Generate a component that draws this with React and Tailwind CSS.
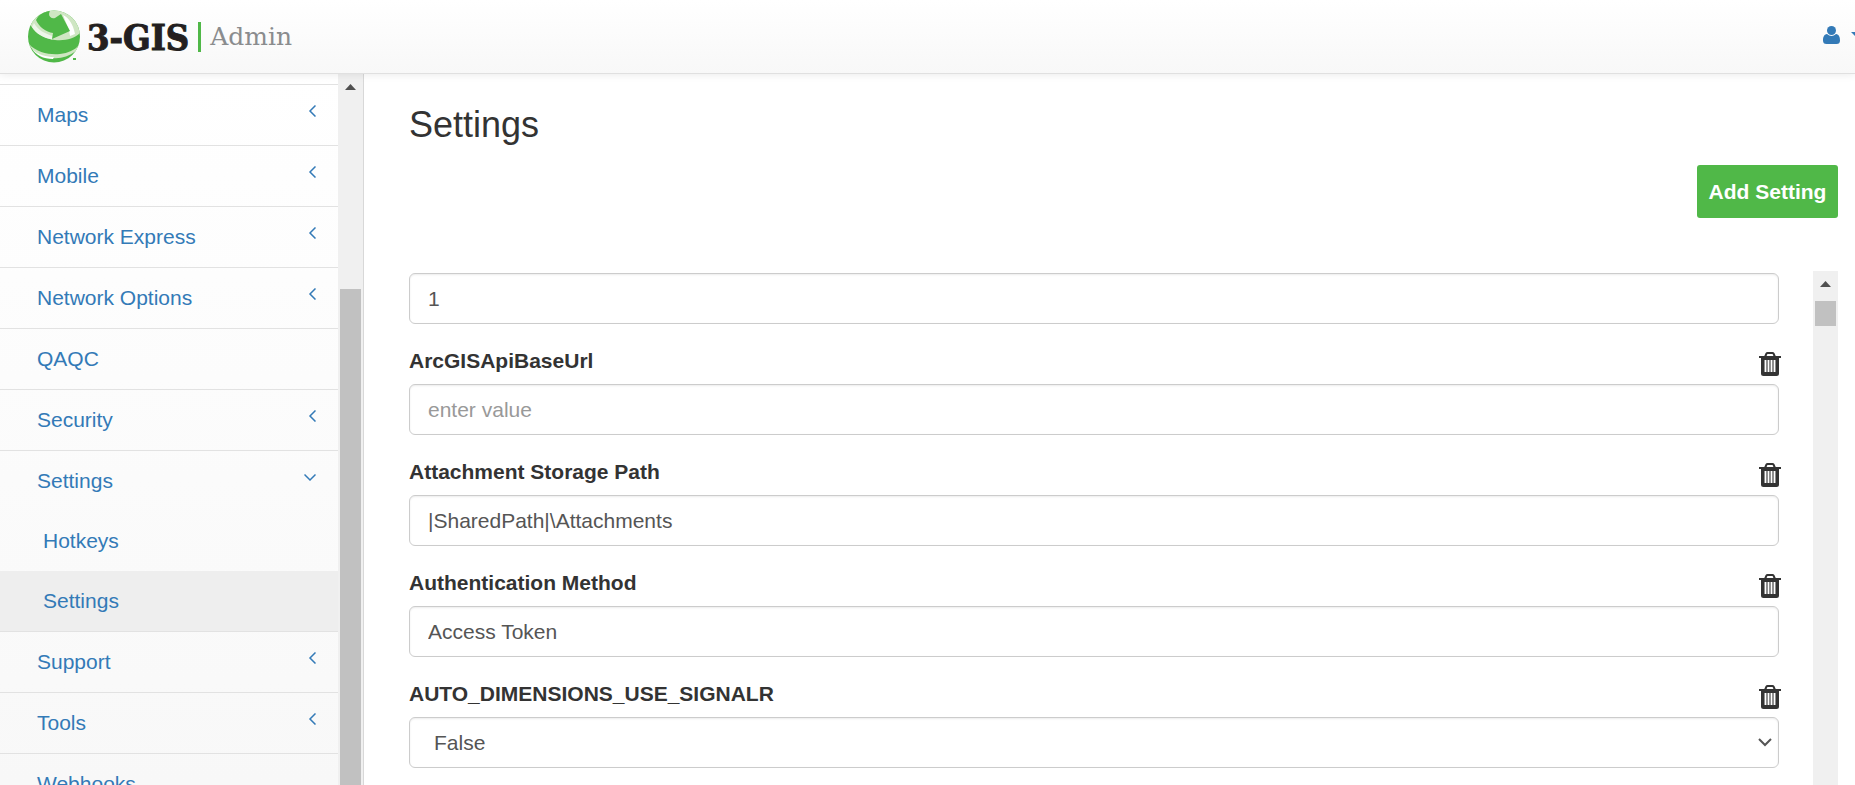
import { useState } from "react";

const menu = [
  { name: "Maps", children: true },
  { name: "Mobile", children: true },
  { name: "Network Express", children: true },
  { name: "Network Options", children: true },
  { name: "QAQC" },
  { name: "Security", children: true },
  { name: "Settings", children: true, open: true, items: ["Hotkeys", "Settings"] },
  { name: "Support", children: true },
  { name: "Tools", children: true },
  { name: "Webhooks" },
];

const initialSettings = [
  { name: "ArcGISApiBaseUrl", value: "" },
  { name: "Attachment Storage Path", value: "|SharedPath|\\Attachments" },
  { name: "Authentication Method", value: "Access Token" },
  { name: "AUTO_DIMENSIONS_USE_SIGNALR", value: "False", options: ["True", "False"] },
];

const fieldClass =
  "block h-[51px] w-full rounded-md border border-[#ccc] bg-white text-[21px] text-[#555] shadow-[inset_0_1px_2px_rgba(0,0,0,0.08)] outline-none placeholder:text-[#999]";

function Globe() {
  return (
    <svg className="h-[54px] w-[54px] shrink-0" viewBox="0 0 54 54">
      <defs>
        <clipPath id="globe">
          <circle cx="27" cy="26.500" r="26" />
        </clipPath>
      </defs>
      <g clipPath="url(#globe)">
        <rect width="54" height="54" fill="#50b848" />
        {/* band behind the arrow */}
        <path d="M0 0 H54 V22 C48 29 38 31 28 30 C19 29 9 24 4 16 Z" fill="#cfe6c3" />
        <path d="M36 5 C42 8 46 14 48 24 L43 26 L42 20 Z" fill="#fff" />
        <path d="M5 17 C9 24 17 28 25 29.500 L26 26 C18 24 11 20 7 13 Z" fill="#eef6ea" />
        {/* arrow */}
        <path d="M9 10 C12 4 17 1 23 0 L22 4 C22 7 25 9 28 8 L34 4 L43 21 L25 29 L26 23 C19 22 12 17 9 10 Z" fill="#50b848" />
        {/* lower gap */}
        <path d="M2 34 C10 43 23 45 33 44 C41 43 48 40 52 35 L49 41 C41 47 33 49 25 48 C15 47 6 43 2 34 Z" fill="#cfe6c3" />
        <path d="M5 39 C11 45 20 47 27 47 L26 49 C16 49 9 45 5 39 Z" fill="#fff" />
      </g>
      <rect x="46" y="48" width="3" height="2" fill="#50b848" />
    </svg>
  );
}

function Chevron({ open }) {
  return (
    <svg className="mb-2 h-3 w-3" viewBox="0 0 12 12" fill="none" stroke="currentColor" strokeWidth="1.5">
      <path d={open ? "M0.5 3.5 L6 9 L11.5 3.5" : "M11.5 0.5 L6 6 L11.5 11.5"} />
    </svg>
  );
}

function Trash() {
  return (
    <svg className="h-6 w-[22px]" viewBox="0 0 22 24">
      <path d="M6 5 L7.5 1.5 Q7.8 1 8.5 1 H13.5 Q14.2 1 14.5 1.5 L16 5" fill="none" stroke="#333" strokeWidth="2" />
      <path d="M0 4 H22 V6 H20 V21.5 Q20 24 17.5 24 H4.500 Q2 24 2 21.500 V6 H0 Z" fill="#333" />
      <path d="M6.500 8 V20 M9.500 8 V20 M12.500 8 V20 M15.500 8 V20" stroke="#fff" strokeWidth="1.900" />
    </svg>
  );
}

function Scrollbar({ offset, thumb }) {
  return (
    <div className="flex w-[25px] shrink-0 flex-col items-center bg-[#f0f0f0]">
      <svg className="mt-[10px] h-[6px] w-[11px] shrink-0" viewBox="0 0 11 6">
        <path d="M5.500 0 L11 6 H0 Z" fill="#505050" />
      </svg>
      <div className={`w-[21px] bg-[#c1c1c1] ${offset} ${thumb}`} />
    </div>
  );
}

function Sidebar() {
  return (
    <aside className="flex w-[364px] shrink-0 border-r border-[#d8d8d8]">
      <nav className="min-w-0 flex-1 overflow-hidden text-[21px] text-[#337ab7]">
        <div className="h-[11px] border-b border-[#e2e2e2]" />
        <ul>
          {menu.map((item) => (
            <li key={item.name} className="border-b border-[#e2e2e2]">
              <a href="#" className="flex h-[60px] items-center justify-between pr-[22px] pl-[37px]">
                {item.name}
                {item.children && <Chevron open={item.open} />}
              </a>
              {item.items && (
                <ul>
                  {item.items.map((sub) => (
                    <li key={sub}>
                      <a
                        href="#"
                        className={`flex h-[60px] items-center pl-[43px] ${sub === "Settings" ? "bg-[#eee]" : ""}`}
                      >
                        {sub}
                      </a>
                    </li>
                  ))}
                </ul>
              )}
            </li>
          ))}
        </ul>
      </nav>
      <Scrollbar offset="mt-[199px]" thumb="flex-1" />
    </aside>
  );
}

function App() {
  const [first, setFirst] = useState("1");
  const [settings, setSettings] = useState(initialSettings);

  const update = (name, value) => {
    setSettings((prev) => prev.map((s) => (s.name === name ? { ...s, value } : s)));
  };

  const remove = (name) => {
    setSettings((prev) => prev.filter((s) => s.name !== name));
  };

  return (
    <div className="flex h-screen flex-col overflow-hidden bg-white font-['Liberation_Sans',Arial,sans-serif] text-[#333]">
      <header className="z-10 flex h-[74px] shrink-0 items-center justify-between overflow-hidden border-b border-[#e0e0e0] bg-linear-to-b from-white to-[#f8f8f8] pl-[27px] shadow-[0_1px_8px_rgba(0,0,0,0.08)]">
        <a href="#" className="flex items-center">
          <Globe />
          <span className="ml-[6px] font-['DejaVu_Serif_Condensed','DejaVu_Serif',serif] text-[36px] leading-none font-bold text-[#231f20] [-webkit-text-stroke:1px_#231f20]">
            3-GIS
          </span>
          <span className="mx-[9px] h-[30px] w-[3px] bg-[#50b848]" />
          <span className="font-['DejaVu_Serif',serif] text-[25px] leading-none text-[#8a8c8e]">Admin</span>
        </a>
        <button className="-mr-2 mb-1 flex shrink-0 items-center gap-[11px] text-[#337ab7]" aria-label="User menu">
          <svg className="h-[18px] w-[17px]" viewBox="0 0 17 18" fill="currentColor">
            <circle cx="8.500" cy="4.500" r="4.500" />
            <path d="M4 8 C1 8.500 0 11 0 14.500 Q0 18 3.500 18 H13.500 Q17 18 17 14.500 C17 11 16 8.500 13 8 Q8.500 12 4 8 Z" />
          </svg>
          <svg className="h-[6px] w-3" viewBox="0 0 12 6" fill="currentColor">
            <path d="M0 0 H12 L6 6 Z" />
          </svg>
        </button>
      </header>

      <div className="flex min-h-0 flex-1 bg-linear-to-b from-white to-[#f8f8f8]">
        <Sidebar />
        <main className="flex min-w-0 flex-1 flex-col bg-white pr-[17px] pl-[45px]">
          <h1 className="mt-[31px] text-[36px] leading-10">Settings</h1>
          <button className="mt-5 h-[53px] w-[141px] self-end rounded-[3px] bg-[#50b848] text-[21px] font-bold text-white">
            Add Setting
          </button>
          <div className="mt-[53px] flex min-h-0 flex-1">
            <div className="min-w-0 flex-1 overflow-hidden pt-[2px] pr-[34px]">
              <input
                aria-label="Value"
                className={`${fieldClass} px-[18px]`}
                value={first}
                onChange={(e) => setFirst(e.target.value)}
              />
              {settings.map((s) => (
                <div key={s.name} className="pt-[21px]">
                  <div className="-mr-[2px] flex h-[39px] items-start justify-between">
                    <label htmlFor={s.name} className="pt-1 text-[21px] leading-6 font-bold">
                      {s.name}
                    </label>
                    <button className="pt-[7px]" aria-label={`Delete ${s.name}`} onClick={() => remove(s.name)}>
                      <Trash />
                    </button>
                  </div>
                  {s.options ? (
                    <div className="relative">
                      <select
                        id={s.name}
                        className={`${fieldClass} appearance-none px-6`}
                        value={s.value}
                        onChange={(e) => update(s.name, e.target.value)}
                      >
                        {s.options.map((o) => (
                          <option key={o}>{o}</option>
                        ))}
                      </select>
                      <svg
                        className="pointer-events-none absolute top-5 right-[7px] h-[10px] w-[14px]"
                        viewBox="0 0 14 10"
                        fill="none"
                        stroke="#555"
                        strokeWidth="2"
                      >
                        <path d="M1 2 L7 8 L13 2" />
                      </svg>
                    </div>
                  ) : (
                    <input
                      id={s.name}
                      className={`${fieldClass} px-[18px]`}
                      placeholder="enter value"
                      value={s.value}
                      onChange={(e) => update(s.name, e.target.value)}
                    />
                  )}
                </div>
              ))}
            </div>
            <Scrollbar offset="mt-[14px]" thumb="h-[25px]" />
          </div>
        </main>
      </div>
    </div>
  );
}

export default App;
